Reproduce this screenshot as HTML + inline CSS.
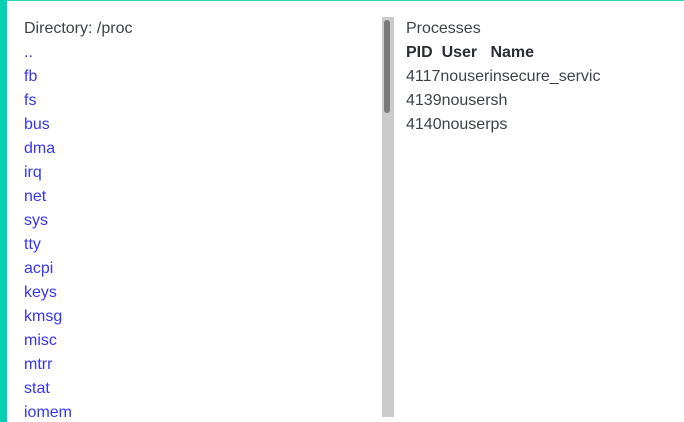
<!DOCTYPE html>
<html><head><meta charset="utf-8"><style>
html,body{margin:0;padding:0;width:684px;height:422px;overflow:hidden;background:#fff}
body{font-family:"Liberation Sans",sans-serif;font-size:16px;color:#3d414b;position:relative}
.top{position:absolute;left:0;top:0;width:684px;height:1px;background:#2dd4b5}
.side{position:absolute;left:0;top:0;width:7px;height:422px;background:#00d1b2}
.left{position:absolute;left:24px;top:17px;line-height:24px}
.left a{display:block;color:#3535f5;text-decoration:none}
.sb{position:absolute;left:382px;top:17px;width:12px;height:400px;background:#cbcbcb}
.thumb{position:absolute;left:384px;top:20px;width:6px;height:93px;background:#7a7a7a;border-radius:3px}
.right{position:absolute;left:406px;top:17px;line-height:24px}
b{color:#2a2d35}
</style></head><body>
<div class="top"></div><div class="side"></div>
<div class="left">
<div>Directory: /proc</div>
<a>..</a><a>fb</a><a>fs</a><a>bus</a><a>dma</a><a>irq</a><a>net</a><a>sys</a><a>tty</a><a>acpi</a><a>keys</a><a>kmsg</a><a>misc</a><a>mtrr</a><a>stat</a><a>iomem</a>
</div>
<div class="sb"></div><div class="thumb"></div>
<div class="right">
<div>Processes</div>
<div><b>PID&nbsp; User&nbsp;&nbsp; Name</b></div>
<div>4117nouserinsecure_servic</div>
<div>4139nousersh</div>
<div>4140nouserps</div>
</div>
</body></html>
